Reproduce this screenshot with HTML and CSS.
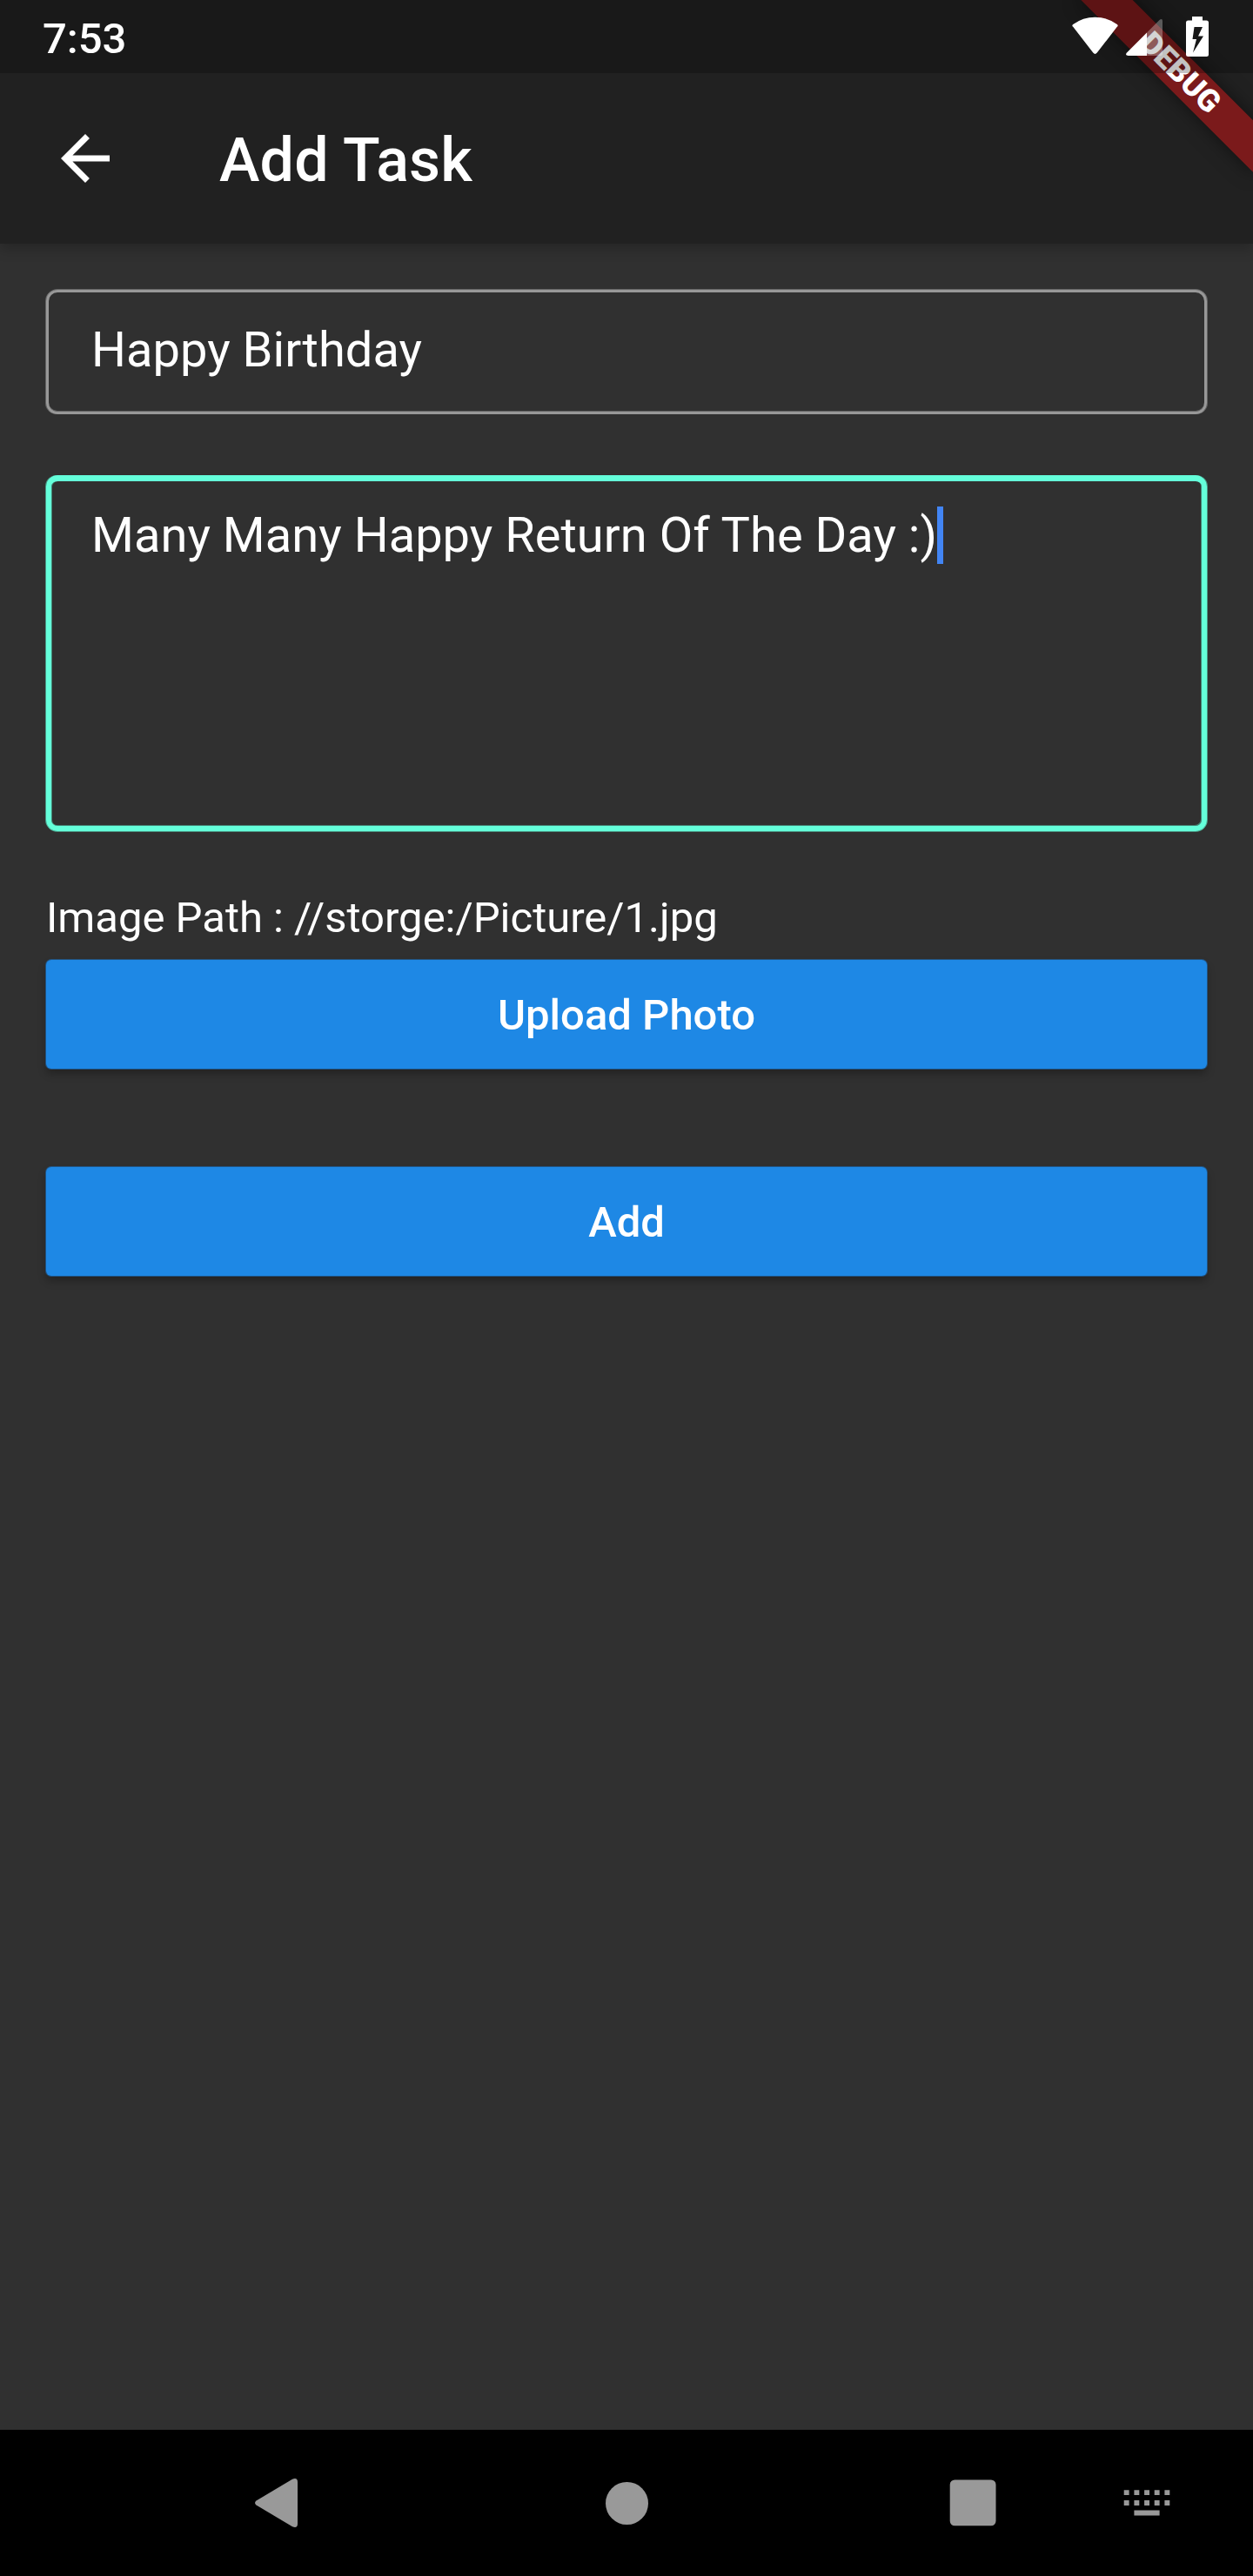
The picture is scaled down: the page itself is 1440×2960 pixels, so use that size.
FILE: index.html
```html
<!DOCTYPE html>
<html lang="en">
<head>
<meta charset="utf-8">
<title>Add Task</title>
<link rel="stylesheet" href="styles.css">
</head>
<body>
<div class="screen">
  <header class="top">
    <div class="status">
      <span class="clock">7:53</span>
      <svg class="status-icons" width="157" height="46" viewBox="0 0 157 46" fill="#fff">
        <path d="M1.2 11.8Q-.6 10.4 1.2 9Q12.500 .7 26.500 .7T51.800 9Q53.600 10.400 51.800 11.800L28.800 41.600Q26.500 44.200 24.200 41.600Z"/>
        <path opacity=".3" d="M86 18.500L100.500 4Q104 1.500 104 5.500V42.500Q104 45 101.500 45H86Z"/>
        <path d="M86 18.500V45H64.500Q60.500 44.500 63 41.500Z"/>
        <path fill-rule="evenodd" d="M138 0H150V4.500H154.500Q157 4.500 157 7V43.500Q157 46 154.500 46H133.500Q131 46 131 43.500V7Q131 4.500 133.500 4.500H138ZM140.500 12L138.500 26H143L139 41.500L151 22.500H145L150 12Z"/>
      </svg>
    </div>
    <div class="appbar">
      <svg class="back" width="84" height="84" viewBox="0 0 24 24" fill="#fff"><path d="M20 11H7.830l5.590-5.590L12 4l-8 8 8 8 1.410-1.410L7.830 13H20v-2z"/></svg>
      <h1 class="title">Add Task</h1>
    </div>
    <div class="banner-clip"><div class="banner-shadow"></div><div class="banner">DEBUG</div></div>
  </header>
  <main class="form">
    <div class="field"><span>Happy Birthday</span></div>
    <div class="field field-focused"><span>Many Many Happy Return Of The Day :)</span><i class="caret"></i></div>
    <p class="path">Image Path : //storge:/Picture/1.jpg</p>
    <button class="button">Upload Photo</button>
    <button class="button button-add">Add</button>
  </main>
  <nav class="navbar">
    <svg width="1440" height="168" viewBox="0 0 1440 168" fill="#999">
      <path d="M294.500 81.500L336 56.700Q342 54.500 342 60V108Q342 113.500 336 111.300L294.500 86.500Q291.500 84 294.500 81.500Z"/>
      <circle cx="720.500" cy="84.500" r="24.500"/>
      <rect x="1091.700" y="57.500" width="52.800" height="52.800" rx="5.500"/>
      <path d="M1291.700 69.200h5.900v5.900h-5.900zM1303.400 69.200h5.900v5.900h-5.900zM1315.100 69.200h5.900v5.900h-5.900zM1326.700 69.200h5.900v5.900h-5.900zM1338.400 69.200h5.900v5.900h-5.900zM1291.700 81h5.900v5.900h-5.900zM1303.400 81h5.900v5.900h-5.900zM1315.100 81h5.900v5.900h-5.900zM1326.700 81h5.900v5.900h-5.900zM1338.400 81h5.900v5.900h-5.900zM1303.400 92.600h29.200v5.900h-29.200z"/>
    </svg>
  </nav>
</div>
</body>
</html>
```
FILE: styles.css
```css
* { box-sizing: border-box; }
body { margin: 0; background: #303030; color: #fff; font-family: Roboto, "Liberation Sans", sans-serif; }
.screen { width: 1440px; height: 2960px; display: flex; flex-direction: column; overflow: hidden; }

.top { position: relative; height: 280px; background: #212121; box-shadow: 0 6px 14px rgba(0, 0, 0, .22); }
.status { position: relative; z-index: 2; height: 84px; padding: 0 51px 0 49px; display: flex; justify-content: space-between; align-items: center; background: rgba(0, 0, 0, .24); }
.clock { font-size: 49px; font-weight: 500; line-height: 58px; margin-top: 5px; }
.status-icons { display: block; }
.appbar { height: 196px; padding-left: 56px; display: flex; align-items: center; gap: 112px; }
.back { display: block; }
.title { margin: 4px 0 0; font-size: 70px; font-weight: 500; line-height: 82px; letter-spacing: .2px; }

.banner-clip { position: absolute; inset: 0; z-index: 1; overflow: hidden; }
.banner, .banner-shadow { position: absolute; top: 63px; right: -56px; width: 280px; height: 42px; transform: rotate(45deg); }
.banner-shadow { box-shadow: 0 0 21px rgba(0, 0, 0, .5); }
.banner { background: #7b1a1b; font-size: 35.7px; font-weight: 900; line-height: 40px; text-align: center; }

.form { flex: 1; padding: 53px 53px 0; display: flex; flex-direction: column; }
.field { height: 143px; padding: 33px 49px; display: flex; align-items: flex-start; border: 3px solid #989898; border-radius: 13px; box-shadow: 0 -1px 0 rgba(152, 152, 152, .5), -1px 0 0 rgba(152, 152, 152, .5), 1px 0 0 rgba(152, 152, 152, .5), inset 0 -1px 0 rgba(152, 152, 152, .5); font-size: 56px; line-height: 66px; letter-spacing: .033px; white-space: nowrap; }
.field-focused { height: 409px; margin-top: 70px; padding: 29px 46px; border: 6px solid #64ffda; border-top-width: 7px; box-shadow: -1px 0 0 rgba(100, 255, 218, .5), 1px 0 0 rgba(100, 255, 218, .5), 0 1px 0 rgba(100, 255, 218, .5), inset 1px 0 0 rgba(100, 255, 218, .4), inset -1px -1px 0 rgba(100, 255, 218, .4); }
.caret { width: 7px; height: 66px; background: #4285f4; }
.path { margin: 71px 0 19px; font-size: 49px; line-height: 58px; }
.button { height: 125px; padding: 3px 0 0; border: 0; border-radius: 6px; background: #1e88e5; color: #fff; box-shadow: 0 0 0 1px rgba(30, 100, 165, .7), 0 6px 10px rgba(0, 0, 0, .28); font: 500 49px/58px Roboto, "Liberation Sans", sans-serif; }
.button-add { margin-top: 113px; }

.navbar { height: 168px; background: #000; }
.navbar svg { display: block; }
```
